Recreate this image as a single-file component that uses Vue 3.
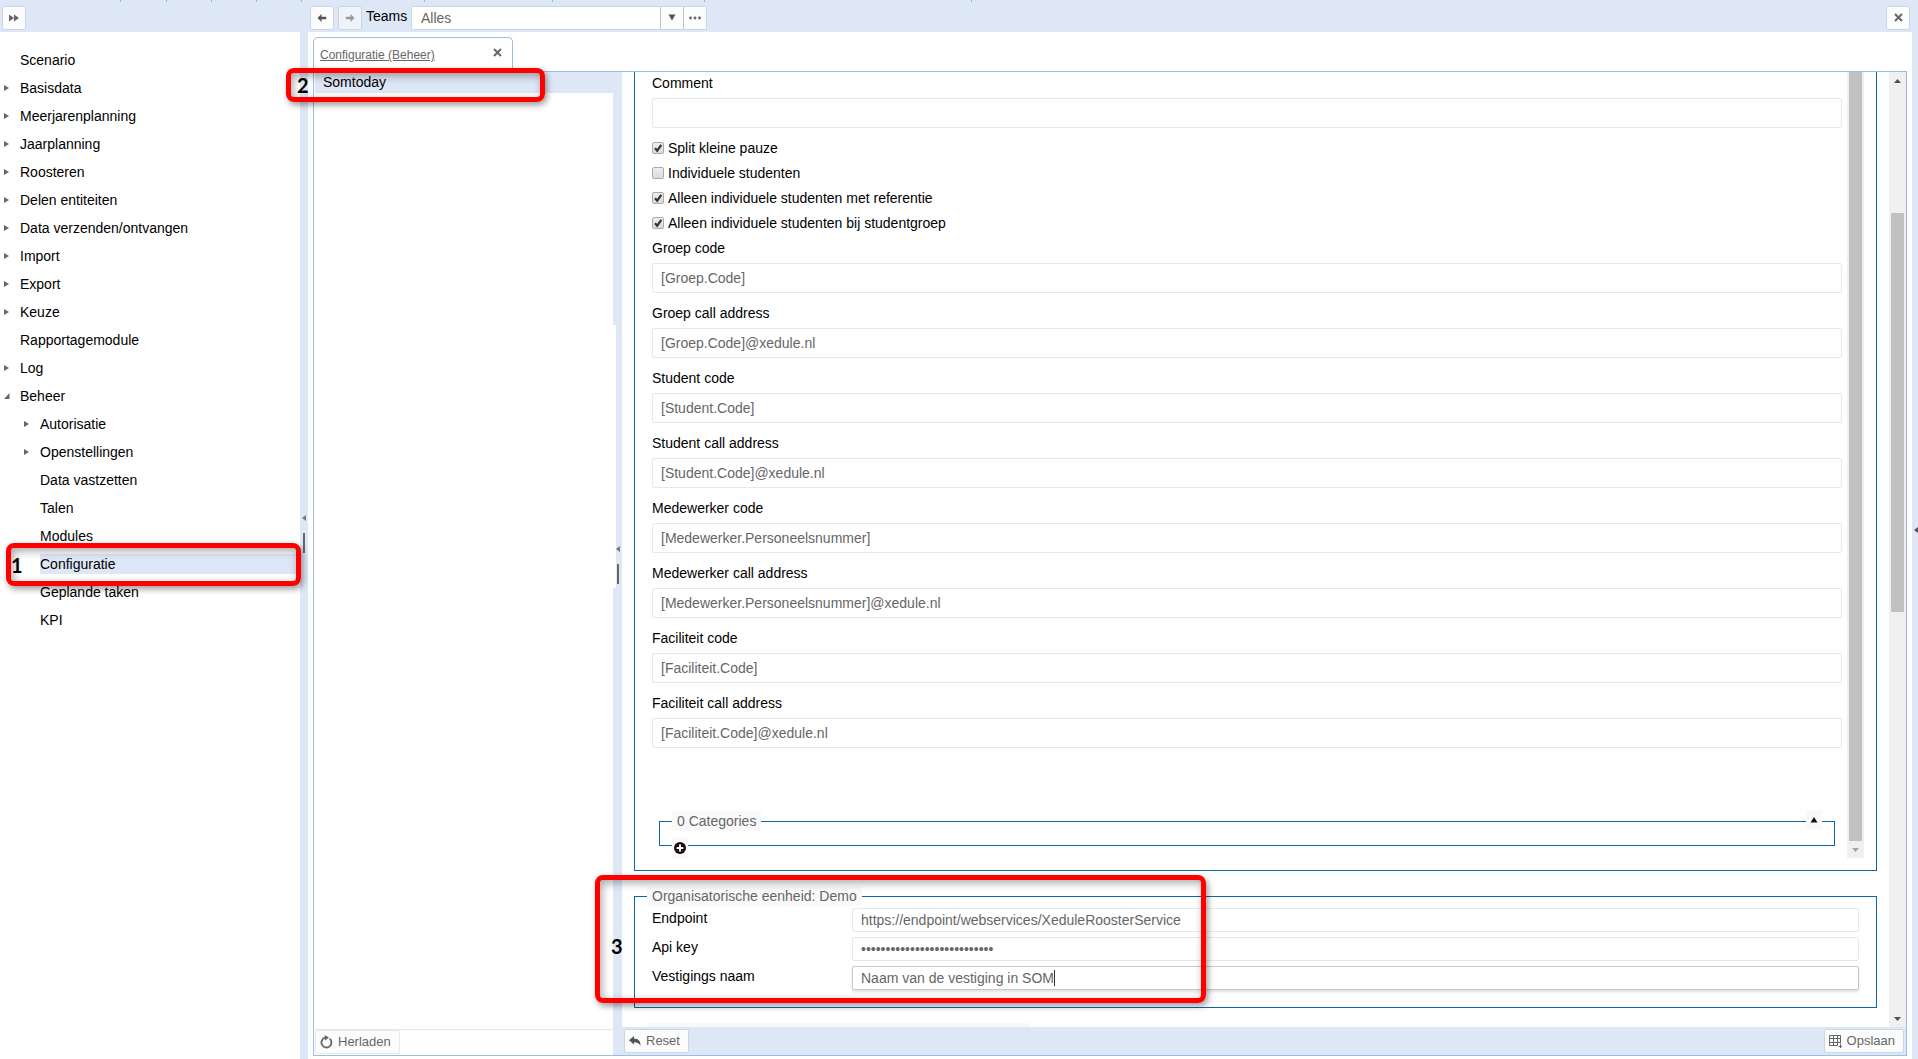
<script setup>
import { ref, reactive } from 'vue'

const tree = reactive([
  { label: 'Scenario', state: 'leaf' },
  { label: 'Basisdata', state: 'closed' },
  { label: 'Meerjarenplanning', state: 'closed' },
  { label: 'Jaarplanning', state: 'closed' },
  { label: 'Roosteren', state: 'closed' },
  { label: 'Delen entiteiten', state: 'closed' },
  { label: 'Data verzenden/ontvangen', state: 'closed' },
  { label: 'Import', state: 'closed' },
  { label: 'Export', state: 'closed' },
  { label: 'Keuze', state: 'closed' },
  { label: 'Rapportagemodule', state: 'leaf' },
  { label: 'Log', state: 'closed' },
  { label: 'Beheer', state: 'open' },
  { label: 'Autorisatie', state: 'closed', child: true },
  { label: 'Openstellingen', state: 'closed', child: true },
  { label: 'Data vastzetten', state: 'leaf', child: true },
  { label: 'Talen', state: 'leaf', child: true },
  { label: 'Modules', state: 'leaf', child: true },
  { label: 'Configuratie', state: 'leaf', child: true, selected: true },
  { label: 'Geplande taken', state: 'leaf', child: true },
  { label: 'KPI', state: 'leaf', child: true },
])

const ticks = [120, 166, 211, 256, 301, 424, 552, 704, 971]

const team = ref('Alles')
const comment = ref('')

const options = reactive([
  { id: 'split', label: 'Split kleine pauze', on: true },
  { id: 'individual', label: 'Individuele studenten', on: false },
  { id: 'with-ref', label: 'Alleen individuele studenten met referentie', on: true },
  { id: 'with-group', label: 'Alleen individuele studenten bij studentgroep', on: true },
])

const fields = reactive([
  { id: 'group-code', label: 'Groep code', value: '[Groep.Code]' },
  { id: 'group-call', label: 'Groep call address', value: '[Groep.Code]@xedule.nl' },
  { id: 'student-code', label: 'Student code', value: '[Student.Code]' },
  { id: 'student-call', label: 'Student call address', value: '[Student.Code]@xedule.nl' },
  { id: 'staff-code', label: 'Medewerker code', value: '[Medewerker.Personeelsnummer]' },
  { id: 'staff-call', label: 'Medewerker call address', value: '[Medewerker.Personeelsnummer]@xedule.nl' },
  { id: 'facility-code', label: 'Faciliteit code', value: '[Faciliteit.Code]' },
  { id: 'facility-call', label: 'Faciliteit call address', value: '[Faciliteit.Code]@xedule.nl' },
])

const endpoint = ref('https://endpoint/webservices/XeduleRoosterService')
const apiKey = ref('x'.repeat(27))
const branch = ref('Naam van de vestiging in SOM')
</script>

<template>
  <div class="app">
    <header class="topbar">
      <i v-for="x in ticks" :key="x" class="tick" :style="{ left: x + 'px' }"></i>
      <div class="topbar-left">
        <button class="btn square" type="button" aria-label="Uitklappen">
          <svg width="12" height="8" viewBox="0 0 12 8"><path d="M1 0.5 6 4 1 7.5zM6 0.5 11 4 6 7.5z" fill="#666" /></svg>
        </button>
      </div>
      <button class="btn square" type="button" aria-label="Terug">
        <svg width="10" height="8" viewBox="0 0 10 8"><path d="M0.5 4 4.5 0v2.8h4.7v2.4H4.5V8z" fill="#555" /></svg>
      </button>
      <button class="btn square forward" type="button" aria-label="Vooruit" disabled>
        <svg width="10" height="8" viewBox="0 0 10 8"><path d="M9.500 4 5.500 0v2.800h-4.700v2.400h4.700V8z" fill="#999" /></svg>
      </button>
      <label class="team-label" for="team">Teams</label>
      <div class="combo">
        <select id="team" v-model="team">
          <option>Alles</option>
        </select>
        <span class="combo-arrow">
          <svg width="8" height="7" viewBox="0 0 8 7"><path d="M0.500 0.500h7L4 6.500z" fill="#555" /></svg>
        </span>
      </div>
      <button class="btn square dots" type="button" aria-label="Meer">
        <svg width="12" height="4" viewBox="0 0 12 4"><circle cx="1.500" cy="2" r="1.400" fill="#666" /><circle cx="6" cy="2" r="1.400" fill="#666" /><circle cx="10.500" cy="2" r="1.400" fill="#666" /></svg>
      </button>
      <button class="btn square close-all" type="button" aria-label="Sluiten">
        <svg width="9" height="9" viewBox="0 0 9 9"><path d="M1 1 8 8M8 1 1 8" stroke="#666" stroke-width="2" /></svg>
      </button>
    </header>

    <div class="body">
      <nav class="sidebar">
        <ul>
          <li v-for="n in tree" :key="n.label" :class="{ child: n.child }">
            <span class="twist">
              <svg v-if="n.state === 'closed'" width="5" height="6" viewBox="0 0 5 6"><path d="M0 0 5 3 0 6z" fill="#666" /></svg>
              <svg v-if="n.state === 'open'" width="6" height="6" viewBox="0 0 6 6"><path d="M5.500 0v6H0z" fill="#666" /></svg>
            </span>
            <a href="#" :class="{ selected: n.selected }">{{ n.label }}</a>
          </li>
        </ul>
        <div class="callout callout-1"><b>1</b></div>
      </nav>

      <div class="splitter outer">
        <svg width="4" height="6" viewBox="0 0 4 6"><path d="M4 0v6L0 3z" fill="#777" /></svg>
        <i class="grip"></i>
      </div>

      <main class="main">
        <div class="tabs">
          <div class="tab">
            <a href="#">Configuratie (Beheer)</a>
            <button type="button" aria-label="Tabblad sluiten">
              <svg width="9" height="9" viewBox="0 0 9 9"><path d="M1 1 8 8M8 1 1 8" stroke="#666" stroke-width="2" /></svg>
            </button>
          </div>
        </div>

        <div class="workspace">
          <section class="list">
            <div class="list-body">
              <div class="list-row">Somtoday</div>
            </div>
            <div class="list-foot">
              <button class="btn text pale" type="button">
                <svg width="13" height="14" viewBox="0 0 13 14"><path d="M9.600 3.600A5 5 0 1 1 5 2.700" fill="none" stroke="#666" stroke-width="1.800" /><path d="M4.600 0 9 2.500 5 5.400z" fill="#666" /></svg>
                Herladen
              </button>
            </div>
            <div class="callout callout-2"><b>2</b></div>
          </section>

          <div class="splitter inner">
            <div class="splitter-face">
              <svg width="4" height="6" viewBox="0 0 4 6"><path d="M4 0v6L0 3z" fill="#777" /></svg>
              <i class="grip"></i>
            </div>
          </div>

          <section class="detail">
            <div class="detail-scroll">
              <form class="detail-form" @submit.prevent>
                <div class="group main-group">
                  <div class="group-content">
                    <div class="field">
                      <label for="comment">Comment</label>
                      <input id="comment" v-model="comment" type="text" />
                    </div>
                    <div v-for="o in options" :key="o.id" class="check">
                      <span class="tick-box">
                        <input :id="o.id" v-model="o.on" type="checkbox" />
                        <svg v-if="o.on" width="12" height="12" viewBox="0 0 12 12"><path d="M3 6.300 5.200 8.700 9.300 2.800" fill="none" stroke="#333" stroke-width="2.200" /></svg>
                      </span>
                      <label :for="o.id">{{ o.label }}</label>
                    </div>
                    <div v-for="f in fields" :key="f.id" class="field">
                      <label :for="f.id">{{ f.label }}</label>
                      <input :id="f.id" v-model="f.value" type="text" />
                    </div>
                    <div class="categories">
                      <fieldset>
                        <legend>0 Categories</legend>
                      </fieldset>
                      <button class="fold" type="button" aria-label="Inklappen">
                        <svg width="8" height="6" viewBox="0 0 8 6"><path d="M4 0 7.500 5.500h-7z" fill="#111" /></svg>
                      </button>
                      <button class="add" type="button" aria-label="Toevoegen">
                        <svg width="12" height="12" viewBox="0 0 12 12"><circle cx="6" cy="6" r="6" fill="#1c0a10" /><path d="M6 2.600v6.800M2.600 6h6.800" stroke="#fff" stroke-width="2" /></svg>
                      </button>
                    </div>
                  </div>
                  <div class="scrollbar">
                    <i class="thumb full"></i>
                    <span class="arrow">
                      <svg width="7" height="4" viewBox="0 0 7 4"><path d="M0 0h7L3.500 4z" fill="#a3a3a3" /></svg>
                    </span>
                  </div>
                </div>

                <fieldset class="unit">
                  <legend>Organisatorische eenheid: Demo</legend>
                  <div class="row">
                    <label for="endpoint">Endpoint</label>
                    <div class="row-input"><input id="endpoint" v-model="endpoint" type="text" /></div>
                  </div>
                  <div class="row">
                    <label for="api-key">Api key</label>
                    <div class="row-input"><input id="api-key" v-model="apiKey" type="password" autocomplete="off" /></div>
                  </div>
                  <div class="row">
                    <label for="branch">Vestigings naam</label>
                    <div class="row-input active"><input id="branch" v-model="branch" type="text" /><i class="caret"></i></div>
                  </div>
                </fieldset>

                <fieldset class="unit next">
                  <legend></legend>
                </fieldset>
              </form>
              <div class="scrollbar">
                <span class="arrow">
                  <svg width="7" height="4" viewBox="0 0 7 4"><path d="M0 4h7L3.500 0z" fill="#505050" /></svg>
                </span>
                <div class="track"><i class="thumb"></i></div>
                <span class="arrow">
                  <svg width="7" height="4" viewBox="0 0 7 4"><path d="M0 0h7L3.500 4z" fill="#505050" /></svg>
                </span>
              </div>
            </div>
            <div class="detail-foot">
              <button class="btn text" type="button">
                <svg width="12" height="10" viewBox="0 0 12 10"><path d="M0 4.200 5 0v2.400C9.500 2.600 11.800 5 11.500 10 10.300 7.300 8.500 6.200 5 6.200v2.400z" fill="#555" /></svg>
                Reset
              </button>
              <button class="btn text" type="button">
                <svg width="13" height="13" viewBox="0 0 13 13"><path d="M0.500 0.500h11v8M8.500 10.500h-8v-10M0.500 3.500h11M0.500 7.500h11M4.500 0.500v10M8.500 0.500v10M11.500 9v4M9.500 11.500h4" fill="none" stroke="#666" stroke-width="1" /></svg>
                Opslaan
              </button>
            </div>
            <div class="callout callout-3"><b>3</b></div>
          </section>
        </div>
      </main>

      <div class="splitter edge">
        <svg width="4" height="6" viewBox="0 0 4 6"><path d="M4 0v6L0 3z" fill="#555" /></svg>
      </div>
    </div>
  </div>
</template>

<style>
body {
  margin: 0;
  background: #fff;
}
</style>

<style scoped>
* {
  box-sizing: border-box;
}

.app {
  display: flex;
  flex-direction: column;
  height: 100vh;
  overflow: hidden;
  font-family: "Liberation Sans", Arial, sans-serif;
  font-size: 14px;
  line-height: 20px;
  color: #000;
}

svg {
  display: block;
  flex: none;
}

button,
input,
select {
  font: inherit;
  margin: 0;
}

/* top bar */
.topbar {
  position: relative;
  display: flex;
  align-items: center;
  flex: none;
  height: 32px;
  padding: 3px 8px 0 2px;
  background: #dee7f6;
}

.tick {
  position: absolute;
  top: 0;
  width: 1px;
  height: 2px;
  background: #8fb4ea;
}

.topbar-left {
  width: 308px;
}

.btn {
  display: flex;
  align-items: center;
  justify-content: center;
  height: 24px;
  padding: 0;
  border: 1px solid #ccd7e6;
  border-radius: 2px;
  background: #fcfcfc;
  color: #666;
}

.square {
  width: 24px;
}

.forward {
  margin-left: 4px;
  background: #eff3fa;
}

.team-label {
  flex: none;
  width: 49px;
  padding: 0 0 4px 4px;
}

.combo {
  position: relative;
  width: 272px;
}

.combo select {
  display: block;
  appearance: none;
  width: 100%;
  height: 24px;
  padding: 0 32px 0 9px;
  border: 1px solid #ccd7e6;
  border-radius: 2px 0 0 2px;
  background: #fff;
  color: #666;
}

.combo-arrow {
  position: absolute;
  top: 1px;
  right: 0;
  display: flex;
  align-items: center;
  justify-content: center;
  width: 23px;
  height: 22px;
  border-left: 1px solid #b9c4d4;
  background: #fcfcfc;
  pointer-events: none;
}

.dots {
  border-left-color: #b9c4d4;
  border-radius: 0 2px 2px 0;
}

.close-all {
  margin-left: auto;
}

/* columns */
.body {
  display: flex;
  flex: 1;
  min-height: 0;
}

.sidebar {
  position: relative;
  flex: none;
  width: 300px;
}

.sidebar ul {
  margin: 0;
  padding: 14px 0 0;
  list-style: none;
}

.sidebar li {
  display: flex;
  padding: 4px 0;
}

.sidebar li.child {
  padding-left: 20px;
}

.twist {
  display: flex;
  align-items: center;
  flex: none;
  width: 20px;
  height: 20px;
  padding-left: 4px;
}

.sidebar a {
  flex: 1;
  color: #000;
  text-decoration: none;
}

.sidebar a.selected {
  background: #dee7f6;
}

.splitter {
  display: flex;
  flex-direction: column;
  align-items: center;
  justify-content: center;
  flex: none;
  width: 8px;
  background: #dee7f6;
}

.splitter.outer {
  padding-bottom: 24px;
}

.splitter.edge {
  align-items: flex-end;
  width: 6px;
  padding-bottom: 32px;
}

.splitter.inner {
  width: 9px;
}

.splitter-face {
  display: flex;
  flex-direction: column;
  align-items: center;
  width: 100%;
  height: 263px;
  padding: 221px 2px 0 0;
  margin-bottom: 215px;
  border-left: 3px solid #fff;
}

.grip {
  width: 2px;
  height: 20px;
  margin-top: 12px;
  background: #666;
}

.main {
  display: flex;
  flex-direction: column;
  flex: 1;
  min-width: 0;
  padding: 5px 5px 3px;
}

.tabs {
  display: flex;
  flex: none;
}

.tab {
  position: relative;
  z-index: 1;
  display: flex;
  align-items: flex-start;
  justify-content: space-between;
  width: 200px;
  height: 35px;
  padding: 7px 10px 0 6px;
  margin-bottom: -1px;
  border: 1px solid #9dbbe8;
  border-bottom: 0;
  border-radius: 5px 5px 0 0;
  background: #fff;
  font-size: 12px;
}

.tab a {
  color: #666;
}

.tab button {
  padding: 3px 0;
  border: 0;
  background: none;
}

.workspace {
  display: flex;
  flex: 1;
  min-height: 0;
  border: 1px solid #9dbbe8;
}

.list {
  position: relative;
  display: flex;
  flex-direction: column;
  flex: none;
  width: 299px;
  padding-left: 1px;
}

.list-body {
  flex: 1;
  border-bottom: 1px solid #e8e8e8;
}

.list-row {
  height: 21px;
  padding-left: 8px;
  background: #dee7f6;
}

.list-foot {
  display: flex;
  flex: none;
  height: 25px;
}

.text {
  gap: 5px;
  padding: 0 8px 0 4px;
  font-size: 13px;
}

.pale {
  border-color: #e8e8e8;
}

.detail {
  position: relative;
  display: flex;
  flex-direction: column;
  flex: 1;
  min-width: 0;
}

.detail-scroll {
  display: flex;
  flex: 1;
  min-height: 0;
}

.detail-form {
  flex: 1;
  min-width: 0;
  padding: 0 12px;
  overflow-y: auto;
  scrollbar-width: none;
}

.detail-foot {
  display: flex;
  justify-content: space-between;
  flex: none;
  height: 28px;
  padding: 2px;
  background: #dee7f6;
}

/* scroll bars */
.scrollbar {
  display: flex;
  flex-direction: column;
  align-items: center;
  flex: none;
  width: 17px;
  background: #f0f0f0;
}

.arrow {
  display: flex;
  align-items: center;
  justify-content: center;
  flex: none;
  height: 17px;
}

.track {
  flex: 1;
  padding-top: 124px;
}

.thumb {
  display: block;
  width: 13px;
  height: 399px;
  background: #c1c1c1;
}

.thumb.full {
  flex: 1;
}

/* groups */
.group {
  display: flex;
  padding: 0 12px 12px 17px;
  border: 1px solid #1164a6;
  border-top: 0;
}

.group-content {
  flex: 1;
  min-width: 0;
  padding: 1px 5px 12px 0;
}

.field {
  margin-bottom: 10px;
}

.field label {
  display: block;
  margin-bottom: 5px;
}

input[type="text"],
input[type="password"] {
  display: block;
  width: 100%;
  height: 24px;
  padding: 0 8px;
  border: 1px solid #e8e8e8;
  border-radius: 2px;
  background: #fff;
  color: #666;
  outline: none;
}

.field input[type="text"] {
  height: 30px;
}

.check {
  display: flex;
  align-items: center;
  gap: 4px;
  margin-bottom: 5px;
}

.tick-box {
  position: relative;
  width: 12px;
  height: 12px;
}

.tick-box input {
  display: block;
  appearance: none;
  width: 12px;
  height: 12px;
  border: 1px solid #aaa;
  border-radius: 2px;
  background: linear-gradient(#ededed, #dcdcdc);
}

.tick-box svg {
  position: absolute;
  top: 0;
  left: 0;
  pointer-events: none;
}

fieldset {
  min-width: 0;
  margin: 0;
  border: 1px solid #1164a6;
}

legend {
  height: 20px;
  padding: 0 5px;
  background: #f9f9f9;
  color: #666;
}

.categories {
  position: relative;
  margin: 63px 7px 0;
}

.categories fieldset {
  padding: 0 12px 14px;
}

.fold,
.add {
  position: absolute;
  display: flex;
  align-items: center;
  justify-content: center;
  width: 16px;
  height: 20px;
  padding: 0;
  border: 0;
  background: #f9f9f9;
}

.fold {
  top: -1px;
  right: 13px;
}

.add {
  bottom: -12px;
  left: 13px;
}

.unit {
  margin-top: 15px;
  padding: 2px 17px 17px;
}

.unit legend {
  margin-left: -5px;
}

.unit.next legend {
  width: 383px;
}

.row {
  display: flex;
  margin-bottom: 5px;
}

.row:last-child {
  margin-bottom: 0;
}

.row label {
  flex: none;
  width: 200px;
}

.row-input {
  position: relative;
  flex: 1;
}

.active input[type="text"] {
  border-color: #c8c8c8;
  box-shadow: 0 2px 3px rgba(0, 0, 0, 0.12);
}

.caret {
  position: absolute;
  top: 4px;
  left: 202px;
  width: 1px;
  height: 16px;
  background: #333;
}

/* numbered highlights over the page */
.callout {
  position: absolute;
  z-index: 2;
  display: flex;
  align-items: center;
  border: 5px solid #f00;
  border-radius: 8px;
  box-shadow: 2px 3px 6px rgba(0, 0, 0, 0.4), inset 2px 3px 8px rgba(0, 0, 0, 0.35);
  font-family: Lato, sans-serif;
  font-size: 20px;
  line-height: 24px;
  pointer-events: none;
}

.callout b {
  font-weight: 700;
}

.callout-1 {
  top: 511px;
  left: 6px;
  width: 295px;
  height: 43px;
}

.callout-2 {
  top: -4px;
  left: -28px;
  width: 259px;
  height: 34px;
  padding-left: 6px;
}

.callout-3 {
  top: 803px;
  left: -27px;
  width: 611px;
  height: 128px;
  padding: 14px 0 0 11px;
}
</style>
